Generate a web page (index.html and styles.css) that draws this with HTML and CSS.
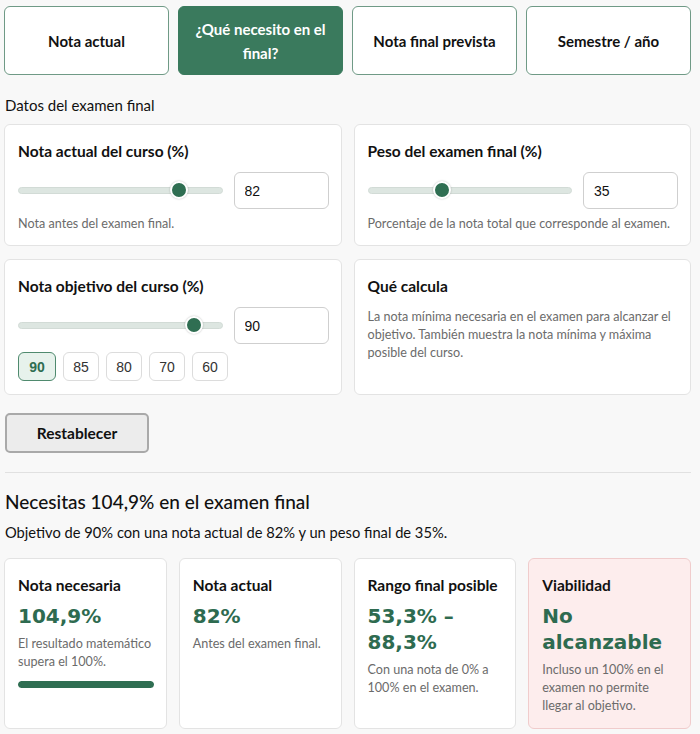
FILE: index.html
```html
<!DOCTYPE html>
<html lang="es">
<head>
  <meta charset="UTF-8">
  <title>Calculadora de examen final</title>
  <link rel="stylesheet" href="styles.css">
</head>
<body>
  <div class="page">
    <div class="tabs">
      <button class="tab">Nota actual</button>
      <button class="tab active">¿Qué necesito en el final?</button>
      <button class="tab">Nota final prevista</button>
      <button class="tab">Semestre / año</button>
    </div>

    <div class="section-label">Datos del examen final</div>

    <div class="input-grid">
      <div class="card">
        <label class="card-title" for="current">Nota actual del curso (%)</label>
        <div class="slider-row">
          <input type="range" min="0" max="100" value="82">
          <input type="text" id="current" class="num" value="82">
        </div>
        <div class="hint">Nota antes del examen final.</div>
      </div>

      <div class="card">
        <label class="card-title" for="weight">Peso del examen final (%)</label>
        <div class="slider-row">
          <input type="range" min="0" max="100" value="35">
          <input type="text" id="weight" class="num" value="35">
        </div>
        <div class="hint">Porcentaje de la nota total que corresponde al examen.</div>
      </div>

      <div class="card">
        <label class="card-title" for="target">Nota objetivo del curso (%)</label>
        <div class="slider-row">
          <input type="range" min="0" max="100" value="90">
          <input type="text" id="target" class="num" value="90">
        </div>
        <div class="chips">
          <button class="chip active">90</button>
          <button class="chip">85</button>
          <button class="chip">80</button>
          <button class="chip">70</button>
          <button class="chip">60</button>
        </div>
      </div>

      <div class="card">
        <div class="card-title">Qué calcula</div>
        <p class="info">La nota mínima necesaria en el examen para alcanzar el objetivo. También muestra la nota mínima y máxima posible del curso.</p>
      </div>
    </div>

    <button class="reset">Restablecer</button>

    <hr class="divider">

    <h2 class="result-title">Necesitas 104,9% en el examen final</h2>
    <p class="result-sub">Objetivo de 90% con una nota actual de 82% y un peso final de 35%.</p>

    <div class="result-grid">
      <div class="card result">
        <div class="card-title">Nota necesaria</div>
        <div class="big">104,9%</div>
        <div class="desc">El resultado matemático supera el 100%.</div>
        <div class="bar"><div class="bar-fill" style="width: 100%"></div></div>
      </div>
      <div class="card result">
        <div class="card-title">Nota actual</div>
        <div class="big">82%</div>
        <div class="desc">Antes del examen final.</div>
      </div>
      <div class="card result">
        <div class="card-title">Rango final posible</div>
        <div class="big">53,3% – 88,3%</div>
        <div class="desc">Con una nota de 0% a 100% en el examen.</div>
      </div>
      <div class="card result bad">
        <div class="card-title">Viabilidad</div>
        <div class="big">No alcanzable</div>
        <div class="desc">Incluso un 100% en el examen no permite llegar al objetivo.</div>
      </div>
    </div>
  </div>
</body>
</html>
```

FILE: styles.css
```css
body {
  font-family: "Segoe UI", Lato, sans-serif;
  background: #f8f8f8;
  color: #111;
  margin: 0;
}

.page {
  padding: 6px 9px 0 4px;
}

.tabs {
  display: grid;
  grid-template-columns: repeat(4, 1fr);
  gap: 9px;
}

.tab {
  height: 69px;
  padding: 0 14px;
  background: white;
  border: 1px solid #6f9a86;
  border-radius: 6px;
  font-family: inherit;
  font-size: 15px;
  font-weight: bold;
  line-height: 24px;
  color: #111;
}

.tab.active {
  background: #3a7a5d;
  border-color: #3a7a5d;
  color: white;
}

.section-label {
  margin: 20px 0 0 1px;
  font-size: 15px;
  line-height: 20px;
}

.input-grid {
  display: grid;
  grid-template-columns: 1fr 1fr;
  gap: 13px 12px;
  margin-top: 9px;
}

.card {
  background: white;
  border: 1px solid #e3e3e3;
  border-radius: 6px;
  padding: 16px 12px 13px 13px;
}

.card-title {
  display: block;
  font-size: 15.5px;
  font-weight: bold;
  line-height: 20px;
}

.slider-row {
  display: grid;
  grid-template-columns: 1fr 95px;
  gap: 11px;
  align-items: center;
  margin-top: 11px;
}

input[type="range"] {
  -webkit-appearance: none;
  appearance: none;
  width: 100%;
  height: 18px;
  margin: 0;
  background: transparent;
}

input[type="range"]::-webkit-slider-runnable-track {
  height: 7px;
  background: #dde6e1;
  border: 1px solid #d2dbd6;
  border-radius: 4px;
}

input[type="range"]::-webkit-slider-thumb {
  -webkit-appearance: none;
  width: 18px;
  height: 18px;
  margin-top: -7px;
  border-radius: 50%;
  background: #2f6e52;
  border: 2px solid white;
  box-shadow: 0 0 2px rgba(0,0,0,0.25);
}

.num {
  box-sizing: border-box;
  width: 95px;
  height: 37px;
  padding: 0 10px;
  border: 1px solid #cfcfcf;
  border-radius: 6px;
  font-family: "Liberation Sans", Arial, sans-serif;
  font-size: 14px;
  color: #111;
}

.hint {
  margin-top: 7px;
  font-size: 12.6px;
  line-height: 16px;
  color: #6b6b6b;
}

.chips {
  display: flex;
  gap: 7px;
  margin-top: 8px;
}

.chip {
  height: 29px;
  min-width: 36px;
  padding: 0 8px;
  background: white;
  border: 1px solid #dcdcdc;
  border-radius: 6px;
  font-family: "Liberation Sans", Arial, sans-serif;
  font-size: 14px;
  color: #333;
}

.chip.active {
  min-width: 38px;
  background: #e7f2ec;
  border-color: #4f8a6e;
  color: #2f6e52;
  font-weight: bold;
}

.info {
  margin: 12px 0 0;
  font-size: 12.6px;
  line-height: 18px;
  color: #6b6b6b;
}

.reset {
  margin: 18px 0 0 1px;
  width: 144px;
  height: 40px;
  background: #ececec;
  border: 2px solid #a9a9a9;
  border-radius: 5px;
  font-family: inherit;
  font-size: 15.5px;
  font-weight: bold;
  color: #111;
}

.divider {
  margin: 19px 0 0 1px;
  border: none;
  border-top: 1px solid #e1e1e1;
}

.result-title {
  margin: 16px 0 0 1px;
  font-size: 19px;
  font-weight: 500;
  line-height: 26px;
}

.result-sub {
  margin: 7px 0 0 1px;
  font-size: 14.7px;
  line-height: 20px;
}

.result-grid {
  display: grid;
  grid-template-columns: repeat(4, 1fr);
  gap: 12px;
  margin-top: 16px;
}

.result {
  min-height: 140px;
}

.big {
  margin-top: 8px;
  font-family: "DejaVu Sans", Verdana, sans-serif;
  font-size: 20px;
  font-weight: bold;
  line-height: 26px;
  color: #2e6b50;
}

.desc {
  margin-top: 6px;
  font-size: 12.6px;
  line-height: 18px;
  color: #6b6b6b;
}

.bar {
  height: 7px;
  margin-top: 10px;
  background: #dde6e1;
  border-radius: 4px;
  overflow: hidden;
}

.bar-fill {
  height: 100%;
  background: #2f6e52;
  border-radius: 4px;
}

.result.bad {
  background: #fdeded;
  border-color: #f0cccc;
}
```
